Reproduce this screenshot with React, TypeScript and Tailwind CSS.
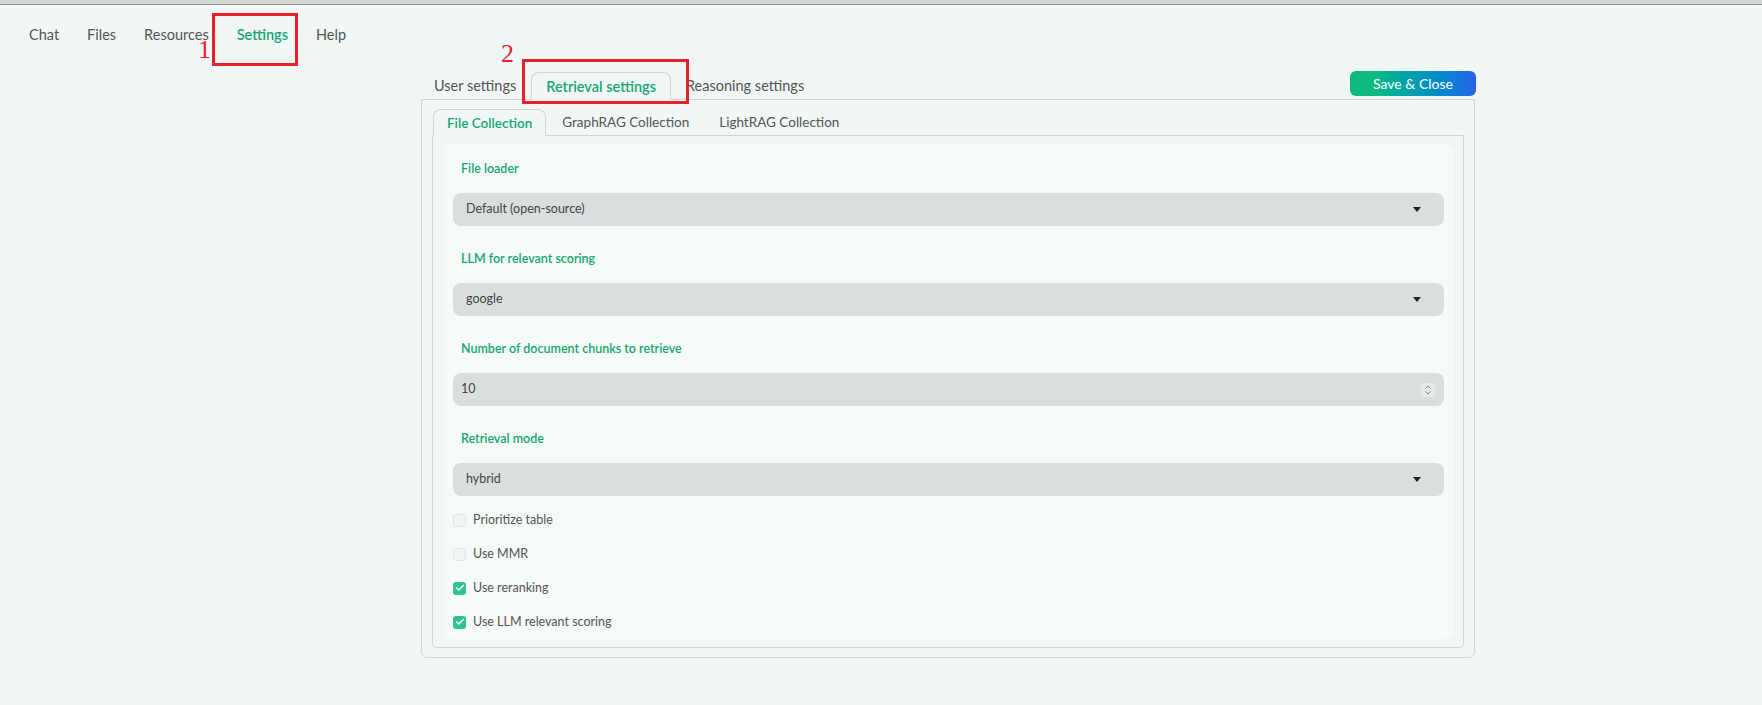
import { Check } from 'lucide-react'

const font = { fontFamily: 'Lato, "Open Sans", "Liberation Sans", sans-serif' }

function Field({ label, children }: { label: string; children: React.ReactNode }) {
  return (
    <div className="mb-[23px]">
      <div className="mb-[14px] pl-[8px] text-[12.5px] font-semibold leading-[20px] text-[#17a673]">{label}</div>
      {children}
    </div>
  )
}

function Select({ value }: { value: string }) {
  return (
    <div className="flex h-[33px] items-center justify-between rounded-[8px] bg-[#d9dfde] pl-[13px] pr-[23px] text-[12.5px] text-[#444]">
      <span>{value}</span>
      <svg width="8" height="5" viewBox="0 0 8 5">
        <path d="M0 0h8L4 5z" fill="#222" />
      </svg>
    </div>
  )
}

function NumberInput({ value }: { value: string }) {
  return (
    <div className="flex h-[33px] items-center justify-between rounded-[8px] bg-[#d9dfde] pl-[8px] pr-[9px] text-[12.5px] text-[#444]">
      <span>{value}</span>
      <div className="flex h-[14px] w-[14px] items-center justify-center bg-[#e4e9e8]">
        <svg width="8" height="12" viewBox="0 0 8 12" fill="none" stroke="#888" strokeWidth="1">
          <path d="M1.5 4.5L4 2l2.5 2.5" />
          <path d="M1.5 7.5L4 10l2.5-2.5" />
        </svg>
      </div>
    </div>
  )
}

function CheckRow({ label, checked }: { label: string; checked?: boolean }) {
  return (
    <div className="flex h-[34px] items-center gap-[7px]">
      {checked ? (
        <span className="flex h-[13px] w-[13px] items-center justify-center rounded-[3px] bg-[#2fc48c]">
          <Check className="h-[10px] w-[10px] text-white" strokeWidth={3.5} />
        </span>
      ) : (
        <span className="h-[13px] w-[13px] rounded-[3px] border border-[#e1e7e5] bg-[#f1f6f5]" />
      )}
      <span className="text-[12.5px] text-[#555]">{label}</span>
    </div>
  )
}

export default function App() {
  const nav = ['Chat', 'Files', 'Resources', 'Settings', 'Help']
  return (
    <div className="relative min-h-[705px] w-full bg-[#f0f7f6]" style={font}>
      <div className="h-[5px] border-b border-[#8f938f] bg-[#d4d7d2]" />

      <div className="flex gap-[28px] pl-[29px] pt-[20px] text-[14.5px] leading-[20px]">
        {nav.map((n) => (
          <span key={n} className={n === 'Settings' ? 'font-semibold text-[#17a673]' : 'text-[#555]'}>
            {n}
          </span>
        ))}
      </div>

      {/* annotations */}
      <div className="pointer-events-none absolute left-[212px] top-[13px] h-[53px] w-[86px] border-[3px] border-[#e8202a]" />
      <span className="absolute left-[198px] top-[35px] text-[26px] leading-[30px] text-[#e8202a]" style={{ fontFamily: '"Liberation Serif", serif' }}>
        1
      </span>
      <span className="absolute left-[501px] top-[39px] text-[26px] leading-[30px] text-[#e8202a]" style={{ fontFamily: '"Liberation Serif", serif' }}>
        2
      </span>
      <div className="pointer-events-none absolute left-[522px] top-[59px] z-10 h-[45px] w-[167px] border-[3px] border-[#e8202a]" />

      <div className="ml-[421px] mt-[27px] w-[1055px]">
        <div className="flex h-[27px] items-end justify-between">
          <div className="flex h-full items-end gap-[2px] text-[14.5px]">
            <div className="flex h-full items-center px-[13px] text-[#555]">User settings</div>
            <div className="relative -mb-px flex h-[28px] items-center rounded-t-[8px] border border-b-0 border-[#cfd6d4] bg-[#f0f7f6] px-[14px] font-semibold text-[#17a673]">
              Retrieval settings
            </div>
            <div className="flex h-full items-center px-[13px] text-[#555]">Reasoning settings</div>
          </div>
          <button className="mb-[3px] h-[25px] w-[126px] rounded-[6px] bg-gradient-to-r from-[#10b981] from-20% to-[#2563eb] text-[14px] text-white">
            Save &amp; Close
          </button>
        </div>

        <div className="mr-[1px] rounded-b-[6px] border border-[#cfd6d4] px-[10px] pb-[9px] pt-[9px]">
          <div className="flex h-[26px] items-end text-[13.5px]">
            <div className="relative -mb-px ml-[1px] flex h-[27px] items-center rounded-t-[8px] border border-b-0 border-[#cfd6d4] bg-[#f0f7f6] px-[13px] font-semibold text-[#17a673]">
              File Collection
            </div>
            <div className="flex h-full items-center px-[16px] text-[#555]">GraphRAG Collection</div>
            <div className="flex h-full items-center px-[14px] text-[#555]">LightRAG Collection</div>
          </div>
          <div className="rounded-b-[4px] border border-[#cfd6d4] pb-[8px] pl-[10px] pr-[9px] pt-[8px]">
            <div className="rounded-[10px] bg-[#f6faf8] px-[10px] pt-[15px]">
              <Field label="File loader">
                <Select value="Default (open-source)" />
              </Field>
              <Field label="LLM for relevant scoring">
                <Select value="google" />
              </Field>
              <Field label="Number of document chunks to retrieve">
                <NumberInput value="10" />
              </Field>
              <div className="mb-[7px]">
                <div className="mb-[14px] pl-[8px] text-[12.5px] font-semibold leading-[20px] text-[#17a673]">Retrieval mode</div>
                <Select value="hybrid" />
              </div>
              <CheckRow label="Prioritize table" />
              <CheckRow label="Use MMR" />
              <CheckRow label="Use reranking" checked />
              <CheckRow label="Use LLM relevant scoring" checked />
            </div>
          </div>
        </div>
      </div>
    </div>
  )
}
